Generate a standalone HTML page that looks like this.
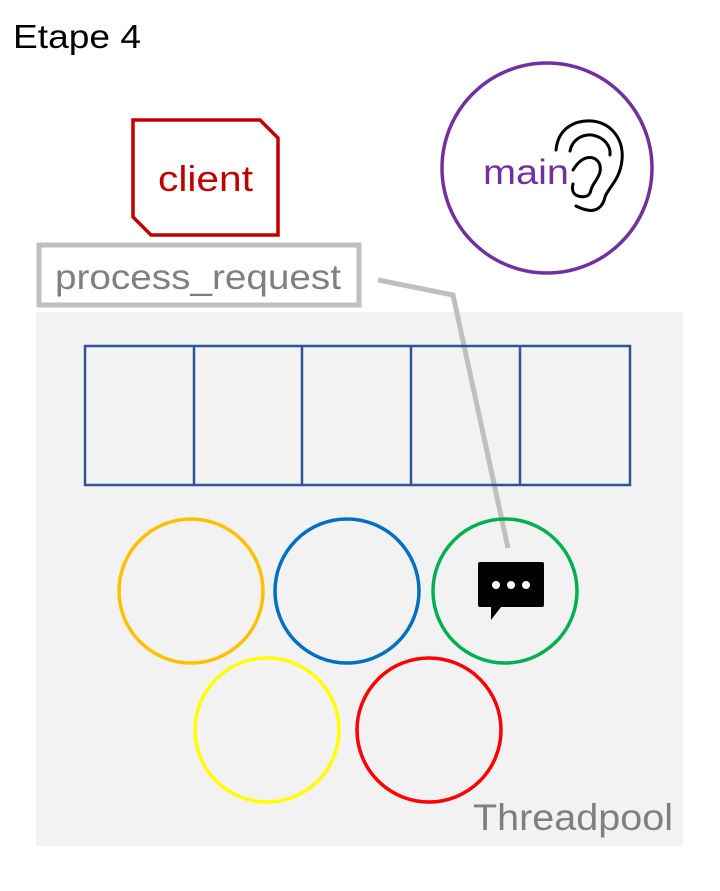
<!DOCTYPE html>
<html><head><style>body{margin:0;background:#fff}svg{display:block}text{font-family:"Liberation Sans",sans-serif}</style></head>
<body>
<svg width="720" height="891" viewBox="0 0 720 891" xmlns="http://www.w3.org/2000/svg">
<rect width="720" height="891" fill="#fff"/>
<text x="13" y="48" font-size="33" textLength="128" lengthAdjust="spacingAndGlyphs" fill="#000">Etape 4</text>
<path d="M133 120 H260 L278 138 V235 H151 L133 217 Z" fill="none" stroke="#c00000" stroke-width="3.5"/>
<text x="158" y="191" font-size="36" textLength="95" lengthAdjust="spacingAndGlyphs" fill="#c00000">client</text>
<circle cx="547" cy="168" r="105" fill="none" stroke="#7030a0" stroke-width="3.5"/>
<text x="483" y="184" font-size="35" textLength="86" lengthAdjust="spacingAndGlyphs" fill="#7030a0">main</text>
<g fill="none" stroke="#000" stroke-width="3" stroke-linecap="round">
<path d="M556 150 C558 128 575 120 592 121 C612 123 624 140 622 160 C620 180 608 188 605 197 C603 207 596 212 587 210 C582 209 578 207 576 206"/>
<path d="M570 151 C572 140 582 134 592 135 C604 137 611 146 610 155"/>
<path d="M573 170 C576 165 580 160 586 158 C594 156 602 161 600 172 C598 180 592 184 591 190 C590 196 585 198 578 196 C572 194 572 188 573 184"/>
</g>
<rect x="39" y="245" width="320" height="60" fill="#fff" stroke="#bfbfbf" stroke-width="5"/>
<text x="55" y="289" font-size="35" textLength="286" lengthAdjust="spacingAndGlyphs" fill="#7f7f7f">process_request</text>
<rect x="36" y="312" width="647" height="534" fill="#f2f2f2"/>
<polyline points="378,280 453,295 508,548" fill="none" stroke="#bfbfbf" stroke-width="5"/>
<rect x="85" y="346" width="545" height="139" fill="none" stroke="#2f5597" stroke-width="2.5"/>
<g stroke="#2f5597" stroke-width="2.5"><line x1="194" y1="346" x2="194" y2="485"/><line x1="302" y1="346" x2="302" y2="485"/><line x1="411" y1="346" x2="411" y2="485"/><line x1="520" y1="346" x2="520" y2="485"/></g>
<g fill="none" stroke-width="3.5">
<circle cx="191" cy="591" r="72" stroke="#ffc000"/>
<circle cx="347" cy="591" r="72" stroke="#0070c0"/>
<circle cx="505" cy="591" r="72" stroke="#00b050"/>
<circle cx="267" cy="730" r="72" stroke="#ffff00"/>
<circle cx="429" cy="730" r="72" stroke="#ff0000"/>
</g>
<path d="M480 562 H542 Q544 562 544 564 V605 Q544 607 542 607 H501 L491 620 V607 H480 Q478 607 478 605 V564 Q478 562 480 562 Z" fill="#000"/>
<g fill="#fff"><circle cx="496" cy="585" r="4"/><circle cx="511" cy="585" r="4"/><circle cx="526" cy="585" r="4"/></g>
<text x="473" y="830" font-size="37" textLength="200" lengthAdjust="spacingAndGlyphs" fill="#7f7f7f">Threadpool</text>
</svg>
</body></html>
